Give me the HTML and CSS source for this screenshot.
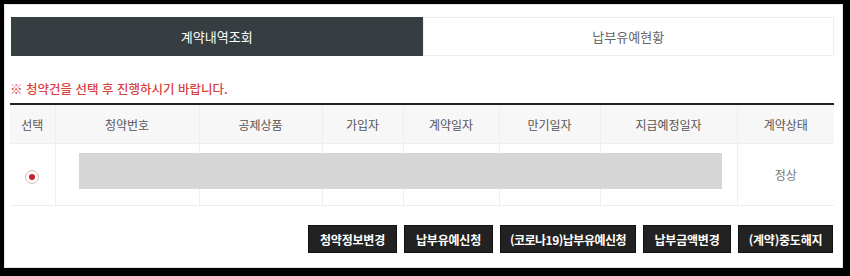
FILE: index.html
```html
<!DOCTYPE html>
<html lang="ko">
<head>
<meta charset="utf-8">
<link rel="stylesheet" href="styles.css">
</head>
<body>
<div class="frame">
  <div class="tabs">
    <div class="tab active">계약내역조회</div>
    <div class="tab">납부유예현황</div>
  </div>
  <p class="notice">※ 청약건을 선택 후 진행하시기 바랍니다.</p>
  <table class="grid">
    <colgroup>
      <col class="c1"><col class="c2"><col class="c3"><col class="c4">
      <col class="c5"><col class="c6"><col class="c7"><col class="c8">
    </colgroup>
    <thead>
      <tr><th>선택</th><th>청약번호</th><th>공제상품</th><th>가입자</th><th>계약일자</th><th>만기일자</th><th>지급예정일자</th><th>계약상태</th></tr>
    </thead>
    <tbody>
      <tr class="row">
        <td><span class="radio"><span class="dot"></span></span></td>
        <td class="masked"><span class="mask"></span></td><td></td><td></td><td></td><td></td><td></td>
        <td>정상</td>
      </tr>
    </tbody>
  </table>
  <div class="actions">
    <button class="btn b-info">청약정보변경</button>
    <button class="btn b-defer">납부유예신청</button>
    <button class="btn b-covid">(코로나19)납부유예신청</button>
    <button class="btn b-amount">납부금액변경</button>
    <button class="btn b-cancel">(계약)중도해지</button>
  </div>
</div>
</body>
</html>
```
FILE: styles.css
```css
html, body { margin: 0; padding: 0; }
body {
  background: #000;
  width: 850px;
  height: 276px;
  box-sizing: border-box;
  padding: 4px 7px 8px 4px;
  font-family: "Noto Sans CJK KR", "Noto Sans", sans-serif;
  overflow: hidden;
}
.frame {
  background: #fff;
  height: 264px;
  box-sizing: border-box;
  border: 1px solid #e6e6e6;
  padding: 12px 8px 0 5px;
}
.tabs { display: flex; margin-left: 1px; }
.tab {
  flex: 1;
  height: 39px;
  box-sizing: border-box;
  display: flex;
  align-items: center;
  justify-content: center;
  font-size: 13px;
  color: #666;
  border: 1px solid #eee;
  background: #fff;
}
.tab.active { background: #363e41; color: #fff; border-color: #363e41; }
.notice {
  margin: 24px 0 0;
  font-size: 12.5px;
  line-height: 18px;
  color: #d9413f;
  font-weight: 500;
}
.grid {
  margin-top: 5px;
  width: 824px;
  border-collapse: collapse;
  table-layout: fixed;
  border-top: 2px solid #222;
}
.c1 { width: 45px; } .c2 { width: 144px; } .c3 { width: 123px; } .c4 { width: 81px; }
.c5 { width: 96px; } .c6 { width: 101px; } .c7 { width: 137px; } .c8 { width: 97px; }
.grid th {
  height: 38px;
  background: #f7f7f7;
  font-weight: normal;
  font-size: 12px;
  color: #555;
  border: 1px solid #eee;
  border-top: 0;
  padding: 0;
}
.grid th:first-child, .grid td:first-child { border-left: 0; }
.grid th:last-child, .grid td:last-child { border-right: 0; }
.grid td {
  height: 61px;
  border: 1px solid #eee;
  padding: 0;
  text-align: center;
  font-size: 12px;
  color: #777;
}
.masked { position: relative; }
.mask {
  position: absolute;
  left: 23px;
  top: 9px;
  width: 643px;
  height: 36px;
  background: #d6d6d6;
}
.radio {
  display: inline-flex;
  width: 12px;
  height: 12px;
  border-radius: 50%;
  border: 1px solid #d9b9b9;
  align-items: center;
  justify-content: center;
  vertical-align: middle;
  margin-top: 2px;
}
.dot { width: 6px; height: 6px; border-radius: 50%; background: #c8202f; }
.actions {
  display: flex;
  justify-content: flex-end;
  gap: 7px;
  margin-top: 19px;
  margin-right: 1px;
}
.btn {
  height: 28px;
  padding: 0;
  background: #222;
  border: 1px solid #111;
  color: #fff;
  font-family: "Noto Sans CJK KR", "Noto Sans", sans-serif;
  font-size: 12px;
  font-weight: 700;
  letter-spacing: -0.2px;
  white-space: nowrap;
}
.b-info { width: 89px; }
.b-defer { width: 89px; }
.b-covid { width: 136px; letter-spacing: -0.5px; }
.b-amount { width: 88px; }
.b-cancel { width: 95px; }
```
